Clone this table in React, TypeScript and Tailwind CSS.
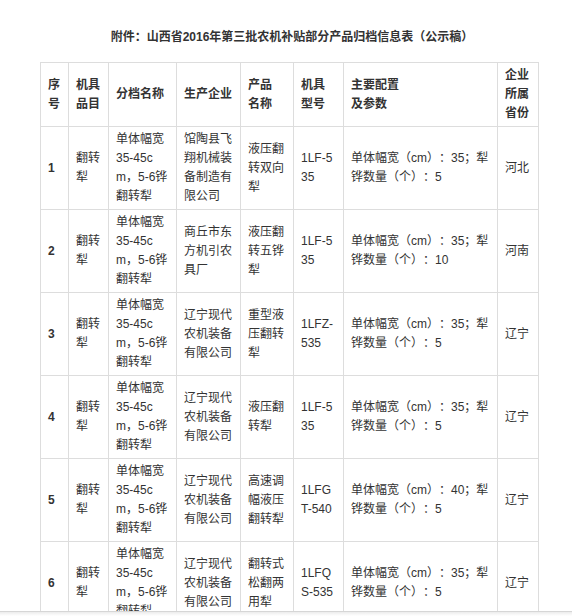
const headers: string[][] = [
  ['序', '号'],
  ['机具', '品目'],
  ['分档名称'],
  ['生产企业'],
  ['产品', '名称'],
  ['机具', '型号'],
  ['主要配置', '及参数'],
  ['企业', '所属', '省份'],
];

// column widths incl. one border
const widths = ['w-[28px]', 'w-[40px]', 'w-[68px]', 'w-[64px]', 'w-[53px]', 'w-[50px]', 'w-[154px]', 'w-[41px]'];

type Row = {
  no: string;
  company: string;
  product: string;
  model: string;
  params: string;
  province: string;
};

const band = '单体幅宽35-45cm，5-6铧翻转犁';

const rows: Row[] = [
  { no: '1', company: '馆陶县飞翔机械装备制造有限公司', product: '液压翻转双向犁', model: '1LF-535', params: '单体幅宽（cm）：35；犁铧数量（个）：5', province: '河北' },
  { no: '2', company: '商丘市东方机引农具厂', product: '液压翻转五铧犁', model: '1LF-535', params: '单体幅宽（cm）：35；犁铧数量（个）：10', province: '河南' },
  { no: '3', company: '辽宁现代农机装备有限公司', product: '重型液压翻转犁', model: '1LFZ-535', params: '单体幅宽（cm）：35；犁铧数量（个）：5', province: '辽宁' },
  { no: '4', company: '辽宁现代农机装备有限公司', product: '液压翻转犁', model: '1LF-535', params: '单体幅宽（cm）：35；犁铧数量（个）：5', province: '辽宁' },
  { no: '5', company: '辽宁现代农机装备有限公司', product: '高速调幅液压翻转犁', model: '1LFGT-540', params: '单体幅宽（cm）：40；犁铧数量（个）：5', province: '辽宁' },
  { no: '6', company: '辽宁现代农机装备有限公司', product: '翻转式松翻两用犁', model: '1LFQS-535', params: '单体幅宽（cm）：35；犁铧数量（个）：5', province: '辽宁' },
];

const cell = 'border border-[#dddddd] px-[7px] py-[3px] align-middle text-left break-all';

export default function App() {
  return (
    <div className="min-h-screen bg-white text-[#333333] text-[12px] leading-[19px] [text-spacing-trim:space-all] font-['Liberation_Sans','Noto_Sans_CJK_SC',sans-serif]">
      <div className="ml-[40px] w-[504px] pt-[28px]">
        {/* Title */}
        <p className="text-center font-bold h-[34px]">
          附件：山西省2016年第三批农机补贴部分产品归档信息表（公示稿）
        </p>

        <table className="w-[498px] table-fixed border-collapse">
          <colgroup>
            {widths.map((w, i) => (
              <col key={i} className={w} />
            ))}
          </colgroup>
          <thead>
            <tr className="h-[64px]">
              {headers.map((lines, i) => (
                <th key={i} className={`${cell} font-bold`}>
                  {lines.map((l, j) => (
                    <div key={j}>{l}</div>
                  ))}
                </th>
              ))}
            </tr>
          </thead>
          <tbody>
            {rows.map((r) => (
              <tr key={r.no} className="h-[83px]">
                <td className={`${cell} font-bold`}>{r.no}</td>
                <td className={cell}>翻转犁</td>
                <td className={cell}>{band}</td>
                <td className={cell}>{r.company}</td>
                <td className={cell}>{r.product}</td>
                <td className={cell}>{r.model}</td>
                <td className={cell}>{r.params}</td>
                <td className={cell}>{r.province}</td>
              </tr>
            ))}
          </tbody>
        </table>
      </div>

      {/* bottom edge of the frame */}
      <div className="fixed bottom-0 left-0 right-0 h-[5px] border-t border-[#d6d6d6] bg-gradient-to-b from-[#ececec] to-white" />
    </div>
  );
}
